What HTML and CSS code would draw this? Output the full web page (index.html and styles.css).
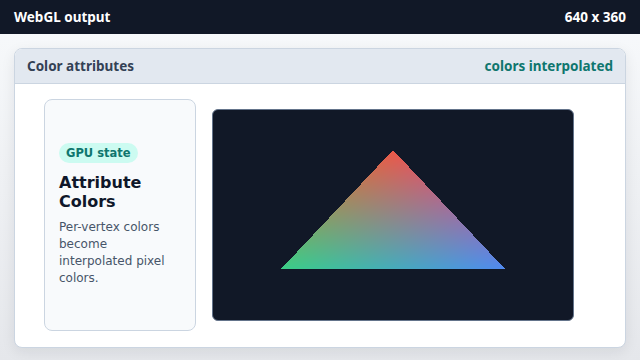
FILE: index.html
```html
<!DOCTYPE html>
<html>
<head>
    <title>WebGL output</title>
    <link rel="stylesheet" href="styles.css">
</head>
<body>
    <div class="topbar">
        <span>WebGL output</span>
        <span>640 x 360</span>
    </div>
    <div class="main">
        <div class="card">
            <div class="card-header">
                <span class="card-title">Color attributes</span>
                <span class="card-status">colors interpolated</span>
            </div>
            <div class="card-body">
                <div class="info">
                    <span class="badge">GPU state</span>
                    <h2>Attribute Colors</h2>
                    <p>Per-vertex colors become interpolated pixel colors.</p>
                </div>
                <canvas id="glCanvas" class="viewport" width="360" height="210"></canvas>
            </div>
        </div>
    </div>
<script src="script.js"></script>
</body>
</html>
```

FILE: styles.css
```css
    body {
        margin: 0;
        font-family: "Noto Sans", "Open Sans", sans-serif;
        background: linear-gradient(#f8fafc, #e5e7eb);
        height: 360px;
        overflow: hidden;
    }

    .topbar {
        height: 34px;
        background-color: #111827;
        color: #fff;
        display: flex;
        align-items: center;
        justify-content: space-between;
        padding: 0 14px;
        font-size: 13.5px;
        font-weight: bold;
    }

    .main {
        padding: 14px;
    }

    .card {
        background-color: #fff;
        border: 1px solid #cbd5e1;
        border-radius: 8px;
        box-shadow: 0 4px 14px rgba(15, 23, 42, 0.08);
        overflow: hidden;
    }

    .card-header {
        height: 34px;
        background-color: #e2e8f0;
        border-bottom: 1px solid #cbd5e1;
        display: flex;
        align-items: center;
        justify-content: space-between;
        padding: 0 12px;
        font-size: 13.5px;
        font-weight: bold;
    }

    .card-title {
        color: #334155;
    }

    .card-status {
        color: #0f766e;
    }

    .card-body {
        display: flex;
        align-items: center;
        gap: 16px;
        padding: 15px 29px 16px;
    }

    .info {
        width: 122px;
        height: 230px;
        padding: 0 14px;
        background-color: #f8fafc;
        border: 1px solid #cbd5e1;
        border-radius: 8px;
        display: flex;
        flex-direction: column;
        justify-content: center;
        align-items: flex-start;
        font-family: "DejaVu Sans", sans-serif;
    }

    .badge {
        background-color: #ccfbf1;
        color: #0f766e;
        font-size: 11.5px;
        line-height: 14px;
        font-weight: bold;
        padding: 3px 7px;
        border-radius: 10px;
    }

    .info h2 {
        margin: 10px 0 0;
        font-size: 16px;
        line-height: 19px;
        color: #0f172a;
    }

    .info p {
        margin: 8px 0 0;
        font-size: 12px;
        line-height: 17px;
        color: #475569;
    }

    .viewport {
        display: block;
        background-color: #111827;
        border: 1px solid #64748b;
        border-radius: 6px;
    }
```

FILE: script.js
```js
    var canvas = document.getElementById("glCanvas");
    var ctx = canvas.getContext("2d");
    var w = canvas.width, h = canvas.height;
    var img = ctx.createImageData(w, h);

    // vertices: position + color, like a vertex buffer
    var verts = [
        { x: 180, y: 40, c: [236, 88, 72] },
        { x: 68, y: 159, c: [58, 206, 134] },
        { x: 292, y: 159, c: [80, 138, 240] }
    ];

    var a = verts[0], b = verts[1], c = verts[2];
    var area = (b.x - a.x) * (c.y - a.y) - (b.y - a.y) * (c.x - a.x);

    for (var y = 0; y < h; y++) {
        for (var x = 0; x < w; x++) {
            var px = x + 0.5, py = y + 0.5;
            var w0 = ((b.x - px) * (c.y - py) - (b.y - py) * (c.x - px)) / area;
            var w1 = ((c.x - px) * (a.y - py) - (c.y - py) * (a.x - px)) / area;
            var w2 = 1 - w0 - w1;
            if (w0 < 0 || w1 < 0 || w2 < 0) continue;
            var i = (y * w + x) * 4;
            for (var k = 0; k < 3; k++) {
                img.data[i + k] = a.c[k] * w0 + b.c[k] * w1 + c.c[k] * w2;
            }
            img.data[i + 3] = 255;
        }
    }

    ctx.putImageData(img, 0, 0);
```
